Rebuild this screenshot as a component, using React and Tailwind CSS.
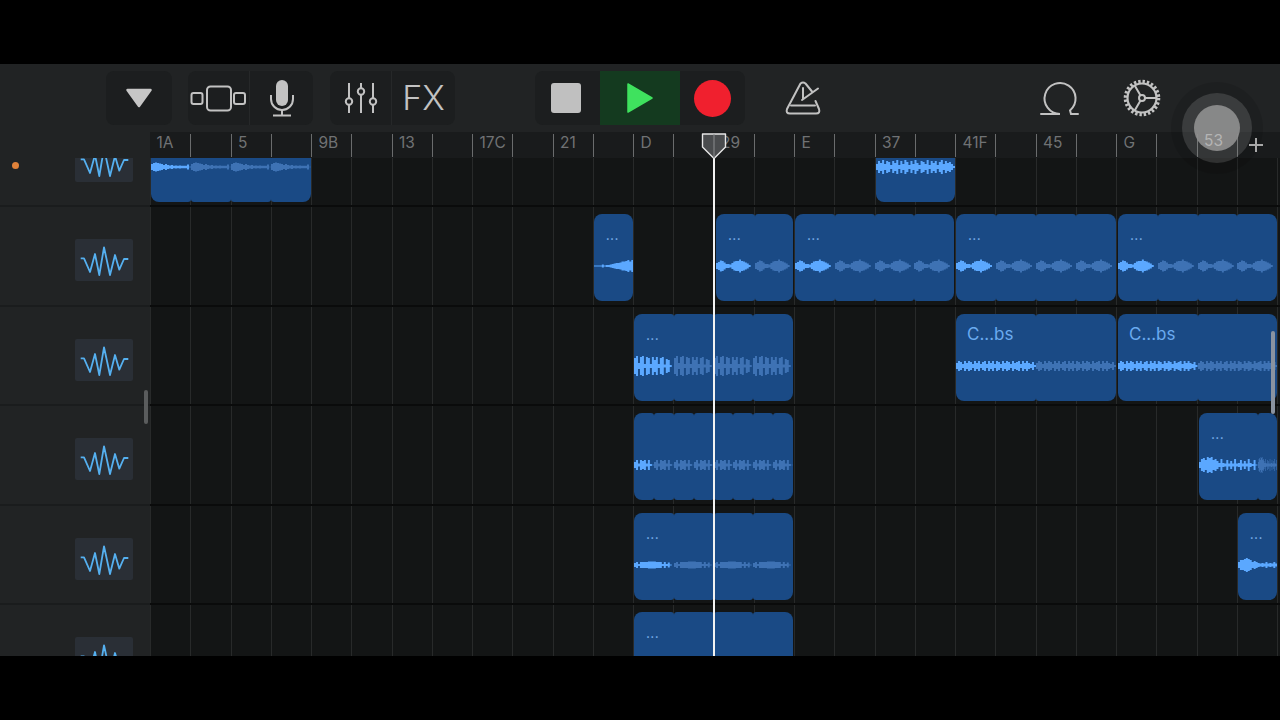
import React from "react";

const BRIGHT = "#5ba8ff";
const DIM = "#3e72b4";

const P = {
  flat: [3,4,4.5,4,3.5,3,2,3,2,1.5,2,1.2,1.5,1.2,1.5,1.2,1.2,1.2,2.5,0.3],
  blob: [3,4,5.5,5,3.5,2,2,1.5,3,4.5,5,5,6.5,5,4.5,3.5,2.5,1,0,0],
  ramp: [0.5,0.5,0.5,0.5,1.5,0.5,1,1,1.5,2,2.5,3,3,3.5,4.5,4.5,5,6,4.5,6],
  spike: [8,10,3,9,10,2,9,8,2,9,6,9,2,8,9,1.5,7,6,1,0],
  fast: [3,5,4,2,5,3,5,4,2,5,3,5,2,4,5,2,5,3,5,2,5,4,2,5,3,5,4,2,5,3,4,5,2,5,3,5,3,2,4,1],
  chat: [3,5,1.5,5,4,5,1.5,5,1,0.2],
  thin: [2,3,1,3,3,3,3,3.5,3.5,3.5,3.5,3,3,3,1,3,1,2.5,0.5,0],
  busy: [3,6,4,7,3,6,5,2,6,4,7,2,6,3,7,5,2,6,3,7,4,2,6,5,3,7,2,6,4,6,2,5,7,3,6,4,5,3,1],
  tail: [3,6,7,5,8,7,8,5,6,4,2,6,2,1.5,5,1.5,4,1.5,6,1.5,2,5,1.5,4,1.5,6,2,1,5,0.5],
  end: [3,5,5,6,7,6,5,3,4,3,2,1.5,2,1.5,3,1.5,2,1.5,3,1.5],
};

function Wave({ data, color }) {
  const w = data.length * 2;
  const top = data.map((a, i) => `L${i * 2} ${14 - a} L${i * 2 + 2} ${14 - a}`).join(" ");
  const bottom = [...data]
    .reverse()
    .map((a, i) => `L${w - i * 2} ${14 + a} L${w - i * 2 - 2} ${14 + a}`)
    .join(" ");
  return (
    <svg viewBox={`0 0 ${w} 28`} preserveAspectRatio="none" className="block w-full h-[28px]">
      <path d={`M0 14 ${top} ${bottom} Z`} fill={color} />
    </svg>
  );
}

function Region({ place, loops, pattern, label, wide, split }) {
  const items = Array.from({ length: loops }, (_, i) => i);
  return (
    <div className={`relative flex h-[87px] overflow-hidden rounded-[8px] ${place}`}>
      {items.map((i) => (
        <div
          key={i}
          className={`min-w-0 rounded-[3px] bg-[#1a4a85] pt-[38px] ${split && i === 0 ? "flex-[3]" : "flex-1"}`}
        >
          {pattern && <Wave data={pattern} color={i === 0 ? BRIGHT : DIM} />}
        </div>
      ))}
      {label && (
        <span
          className={
            wide
              ? "absolute left-[11px] top-[10px] text-[17px] leading-[20px] text-[#6aaaf0]"
              : "absolute left-[12px] top-[13px] text-[14px] leading-[16px] tracking-[0.3px] text-[#7fb4ee]"
          }
        >
          {label}
        </span>
      )}
    </div>
  );
}

const rows = [
  [
    { place: "col-start-1 col-span-4 ml-[1px]", loops: 4, pattern: P.flat },
    { place: "col-start-19 col-span-2 ml-[1.5px]", loops: 1, pattern: P.busy },
  ],
  [
    { place: "col-start-12 col-span-1 ml-[1px]", loops: 1, pattern: P.ramp, label: "..." },
    { place: "col-start-15 col-span-2 ml-[2.5px] mr-[1px]", loops: 2, pattern: P.blob, label: "..." },
    { place: "col-start-17 col-span-4 ml-[1px] mr-[1px]", loops: 4, pattern: P.blob, label: "..." },
    { place: "col-start-21 col-span-4 ml-[1px]", loops: 4, pattern: P.blob, label: "..." },
    { place: "col-start-25 col-span-4 ml-[2px]", loops: 4, pattern: P.blob, label: "..." },
  ],
  [
    { place: "col-start-13 col-span-4 ml-[1px] mr-[1px]", loops: 4, pattern: P.spike, label: "..." },
    { place: "col-start-21 col-span-4 ml-[1px]", loops: 2, pattern: P.fast, label: "C...bs", wide: true },
    { place: "col-start-25 col-span-4 ml-[2px]", loops: 2, pattern: P.fast, label: "C...bs", wide: true },
  ],
  [
    { place: "col-start-13 col-span-4 ml-[1px] mr-[1px]", loops: 8, pattern: P.chat },
    { place: "col-start-27 col-span-2 ml-[2.5px]", loops: 2, split: true, pattern: P.tail, label: "..." },
  ],
  [
    { place: "col-start-13 col-span-4 ml-[1px] mr-[1px]", loops: 4, pattern: P.thin, label: "..." },
    { place: "col-start-28 col-span-1 ml-[1px]", loops: 1, pattern: P.end, label: "..." },
  ],
  [{ place: "col-start-13 col-span-4 ml-[1px] mr-[1px]", loops: 4, label: "..." }],
];

const ruler = ["1A","","5","","9B","","13","","17C","","21","","D","","29","","E","","37","","41F","","45","","G","","",""];
const cells = Array.from({ length: 29 }, (_, i) => i);

function TrackIcon() {
  return (
    <div className="h-[42px] w-[58px] rounded-[2px] bg-[#2a2f36]">
      <svg viewBox="0 0 58 42" className="block h-[42px] w-[58px]" fill="none">
        <path
          d="M5.7 19.3 L9 19.3 L15 33 L20 15 L24.3 36 L29 8.3 L35 36 L40 16 L44.3 30.7 L49 20 L53.3 20"
          stroke="#55b0f0"
          strokeWidth="1.8"
          strokeLinejoin="round"
        />
      </svg>
    </div>
  );
}

function Row({ row, clipped }) {
  return (
    <div className={`flex w-full flex-none flex-col justify-end overflow-hidden ${clipped ? "h-[49px]" : "h-[99.5px]"}`}>
      <div className="flex h-[99.5px] flex-none">
        <div className="flex w-[150px] flex-none justify-end border-b-2 border-[#1a1c1d] bg-[#212324] pr-[17px] pt-[32px]">
          <TrackIcon />
        </div>
        <div className="relative grid flex-1 grid-cols-[repeat(28,40.25px)] content-start border-b-2 border-[#0a0b0b] bg-[#131515] pt-[7px]">
          <div className="absolute inset-0 flex">
            {cells.map((c) => (
              <div key={c} className="w-[40.25px] flex-none border-l border-[#282a2a]" />
            ))}
          </div>
          {row.map((r, i) => (
            <Region key={i} {...r} />
          ))}
        </div>
      </div>
    </div>
  );
}

export default function App() {
  return (
    <div className="relative flex h-[720px] w-[1280px] flex-col overflow-hidden bg-black py-[64px] [font-family:Inter,sans-serif]">
      {/* toolbar */}
      <div className="flex h-[68px] flex-none items-start bg-[#212324] pl-[106px] pt-[7px]">
        <div className="flex h-[54px] w-[66px] items-center justify-center rounded-[8px] bg-[#1c1e1f]">
          <svg width="28" height="20" viewBox="0 0 28 20">
            <path d="M2.5 2 H25.5 L14 18 Z" fill="#c6c6c6" stroke="#c6c6c6" strokeWidth="2.5" strokeLinejoin="round" />
          </svg>
        </div>
        <div className="ml-[16px] flex h-[54px] w-[125px] rounded-[8px] bg-[#1c1e1f]">
          <div className="flex w-[62px] items-center justify-center border-r border-[#262829] pr-[2px]">
            <svg width="56" height="27" viewBox="0 0 56 27" fill="none" stroke="#c2c2c2" strokeWidth="2">
              <rect x="1.5" y="8" width="11" height="11" rx="2" />
              <rect x="17" y="1.5" width="24" height="24" rx="3.5" />
              <rect x="44" y="8" width="11" height="11" rx="2" />
            </svg>
          </div>
          <div className="flex flex-1 items-center justify-center">
            <svg width="26" height="38" viewBox="0 0 26 38" fill="none" stroke="#c2c2c2" strokeWidth="2">
              <rect x="7" y="1" width="12" height="26" rx="6" fill="#c2c2c2" stroke="none" />
              <path d="M2 16 V20 A11 11 0 0 0 24 20 V16" />
              <path d="M13 31 V36 M4 36.5 H22" />
            </svg>
          </div>
        </div>
        <div className="ml-[17px] flex h-[54px] w-[125px] rounded-[8px] bg-[#1c1e1f]">
          <div className="flex w-[62px] items-center justify-center border-r border-[#262829]">
            <svg width="34" height="32" viewBox="0 0 34 32" fill="none" stroke="#c2c2c2" strokeWidth="2">
              <path d="M5 1 V16 M5 23 V31 M17 1 V6 M17 13 V31 M29 1 V16 M29 23 V31" />
              <circle cx="5" cy="19.5" r="3.2" />
              <circle cx="17" cy="9.5" r="3.2" />
              <circle cx="29" cy="19.5" r="3.2" />
            </svg>
          </div>
          <div className="flex flex-1 items-center justify-center text-[34px] font-light leading-none text-[#c2c2c2]">FX</div>
        </div>
        <div className="ml-[80px] flex h-[54px] w-[210px] rounded-[8px] bg-[#1c1e1f]">
          <div className="flex w-[65px] items-center justify-center pr-[3px]">
            <div className="h-[30px] w-[30px] rounded-[3px] bg-[#c0c0c0]" />
          </div>
          <div className="flex w-[80px] items-center justify-center bg-[#143a1f]">
            <svg width="30" height="32" viewBox="0 0 30 32">
              <path d="M3 2 L27 16 L3 30 Z" fill="#3fe25e" stroke="#3fe25e" strokeWidth="1.5" strokeLinejoin="round" />
            </svg>
          </div>
          <div className="flex flex-1 items-center justify-center">
            <div className="h-[37px] w-[37px] rounded-full bg-[#f0202e]" />
          </div>
        </div>
        <div className="ml-[39px] mt-[9px] h-[36px] w-[38px]">
          <svg width="38" height="36" viewBox="0 0 38 36" fill="none" stroke="#c2c2c2" strokeWidth="2" strokeLinejoin="round" strokeLinecap="round">
            <path d="M28 11.5 L21.5 3.5 Q19 1.5 16.5 3.5 L3 29 Q1.5 33.5 6 33.5 H32 Q36.5 33.5 35 29 L31.5 21" />
            <path d="M7 25.5 H31" />
            <path d="M19 8 V19 M18 20 L34 8.5" />
          </svg>
        </div>
        <div className="ml-[217px] mt-[9px] h-[36px] w-[41px]">
          <svg width="41" height="36" viewBox="0 0 41 36" fill="none" stroke="#c2c2c2" strokeWidth="2" strokeLinecap="round">
            <path d="M2 34 H21 A15.5 15.5 0 1 1 31 30.4 L32 34 H39" />
          </svg>
        </div>
        <div className="ml-[42px] mt-[7px] h-[40px] w-[40px]">
          <svg width="40" height="40" viewBox="0 0 40 40" fill="none" stroke="#c2c2c2" strokeWidth="2">
            <circle cx="20" cy="20" r="16.5" strokeWidth="3.6" strokeDasharray="2.4 1.92" />
            <circle cx="20" cy="20" r="14.5" strokeWidth="2.2" />
            <circle cx="20" cy="20" r="3" />
            <path d="M23 20 H34.5 M18.5 17.4 L12.7 7.5 M18.5 22.6 L12.7 32.5" />
          </svg>
        </div>
      </div>

      {/* ruler */}
      <div className="flex h-[26px] flex-none bg-[#212324]">
        <div className="w-[150px] flex-none" />
        <div className="grid flex-1 grid-cols-[repeat(28,40.25px)] bg-[#191b1c] pb-px pt-[2px]">
          {ruler.map((t, i) => (
            <div key={i} className={`h-[23px] whitespace-nowrap pl-[6.5px] text-[15.5px] leading-[18px] text-[#707274] ${i === 0 ? "" : "border-l border-[#6a6c6d]"}`}>
              {t}
            </div>
          ))}
        </div>
      </div>

      {/* tracks */}
      <div className="flex min-h-0 flex-1 flex-col overflow-hidden">
        {rows.map((row, i) => (
          <Row key={i} row={row} clipped={i === 0} />
        ))}
      </div>

      {/* overlays */}
      <div className="absolute left-[12px] top-[162px] h-[7px] w-[7px] rounded-full bg-[#e0823a]" />
      <div className="absolute left-[144px] top-[390px] h-[34px] w-[4px] rounded-full bg-[#5a5c5d]" />
      <div className="absolute left-[1271px] top-[331px] h-[83px] w-[4px] rounded-full bg-[#8a93a0]" />

      <div className="absolute bottom-[64px] left-[713px] top-[156px] w-[2px] bg-[#f2f2f2]" />
      <div className="absolute left-[701px] top-[133px] h-[27px] w-[26px]">
        <svg width="26" height="27" viewBox="0 0 26 27" fill="#4a4c4e" stroke="#e6e6e6" strokeWidth="1.4" strokeLinejoin="round">
          <path d="M1.5 1 H24.5 V14 L13 25.5 L1.5 14 Z" />
          <path d="M13 1 V25" stroke="#8a8c8e" fill="none" strokeWidth="1" />
        </svg>
      </div>

      <div className="absolute left-[1171px] top-[82px] flex h-[92px] w-[92px] items-center justify-center rounded-full bg-black/10">
        <div className="flex h-[70px] w-[70px] items-center justify-center rounded-full bg-white/[0.13]">
          <div className="h-[46px] w-[46px] rounded-full bg-[#909090]/90" />
        </div>
      </div>
      <span className="absolute left-[1204px] top-[132px] text-[15.5px] leading-[18px] text-[#b4b4b4]">53</span>
      <div className="absolute left-[1249px] top-[144px] h-[2px] w-[14px] bg-[#a8a8a8]" />
      <div className="absolute left-[1255px] top-[138px] h-[14px] w-[2px] bg-[#a8a8a8]" />
    </div>
  );
}
